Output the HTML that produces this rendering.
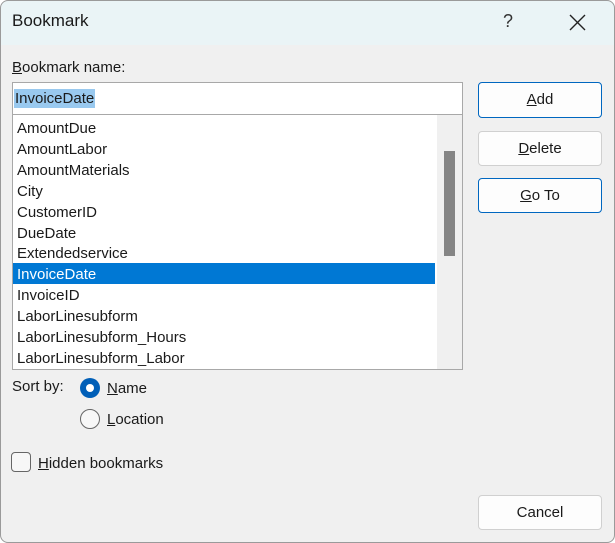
<!DOCTYPE html><html><head><style>
*{box-sizing:border-box;margin:0;padding:0}
body{width:615px;height:543px;background:#fff;font-family:"Liberation Sans",sans-serif;font-size:15px;color:#1a1a1a;position:relative;overflow:hidden}
.win{position:absolute;left:0;top:0;width:615px;height:543px;background:#f0f0f0;border-radius:8px;overflow:hidden}
.frame{position:absolute;left:0;top:0;width:615px;height:543px;border:1px solid #9a9a9a;border-radius:8px;pointer-events:none}
.title{position:absolute;left:0;top:0;width:100%;height:45px;background:#eaf4f6}
.abs{position:absolute}
.btn{position:absolute;left:478px;width:124px;background:#fdfdfd;border:1px solid #d0d0d0;border-radius:4px;text-align:center}
u{text-decoration:underline}
.item{position:absolute;left:4px;height:21px;line-height:21px}
</style></head><body><div class="win">
<div class="title"></div>
<div class="abs" style="left:12px;top:11px;font-size:17px">Bookmark</div>
<div class="abs" style="left:503px;top:11px;font-size:18px;color:#333">?</div>
<svg class="abs" style="left:569px;top:14px" width="17" height="17"><path d="M1 1L16 16M16 1L1 16" stroke="#222" stroke-width="1.4"/></svg>
<div class="abs" style="left:12px;top:59px"><u>B</u>ookmark name:</div>
<div class="abs" style="left:12px;top:82px;width:451px;height:33px;background:#fff;border:1px solid #a8a8a8"><span style="position:absolute;left:1px;top:6px;background:#99c9ef;padding:0 1px;line-height:19px">InvoiceDate</span></div>
<div class="abs" style="left:12px;top:114px;width:451px;height:256px;background:#fff;border:1px solid #a8a8a8;overflow:hidden">
<div class="abs" style="left:424px;top:0;width:26px;height:255px;background:#f0f0f0"></div>
<div class="abs" style="left:431px;top:36px;width:11px;height:105px;background:#858585"></div>
<div class="abs" style="left:0;top:148px;width:422px;height:21px;background:#0078d4"></div>
<div class="item" style="top:3px">AmountDue</div>
<div class="item" style="top:24px">AmountLabor</div>
<div class="item" style="top:45px">AmountMaterials</div>
<div class="item" style="top:66px">City</div>
<div class="item" style="top:87px">CustomerID</div>
<div class="item" style="top:108px">DueDate</div>
<div class="item" style="top:128px">Extendedservice</div>
<div class="item" style="top:149px;color:#fff">InvoiceDate</div>
<div class="item" style="top:170px">InvoiceID</div>
<div class="item" style="top:191px">LaborLinesubform</div>
<div class="item" style="top:212px">LaborLinesubform_Hours</div>
<div class="item" style="top:233px">LaborLinesubform_Labor</div>
</div>
<div class="btn" style="top:82px;height:36px;line-height:34px;border:1px solid #0067c0"><u>A</u>dd</div>
<div class="btn" style="top:131px;height:35px;line-height:33px"><u>D</u>elete</div>
<div class="btn" style="top:178px;height:35px;line-height:33px;border:1px solid #0067c0"><u>G</u>o To</div>
<div class="btn" style="top:495px;height:35px;line-height:33px">Cancel</div>
<div class="abs" style="left:12px;top:378px">Sort by:</div>
<div class="abs" style="left:80px;top:378px;width:20px;height:20px;border-radius:50%;background:#005fb8"><div class="abs" style="left:6px;top:6px;width:8px;height:8px;border-radius:50%;background:#fff"></div></div>
<div class="abs" style="left:107px;top:380px"><u>N</u>ame</div>
<div class="abs" style="left:80px;top:409px;width:20px;height:20px;border-radius:50%;border:1px solid #666;background:#f7f7f7"></div>
<div class="abs" style="left:107px;top:411px"><u>L</u>ocation</div>
<div class="abs" style="left:11px;top:452px;width:20px;height:20px;border-radius:4px;border:1px solid #666;background:#f7f7f7"></div>
<div class="abs" style="left:38px;top:455px"><u>H</u>idden bookmarks</div>
</div><div class="frame"></div></body></html>
